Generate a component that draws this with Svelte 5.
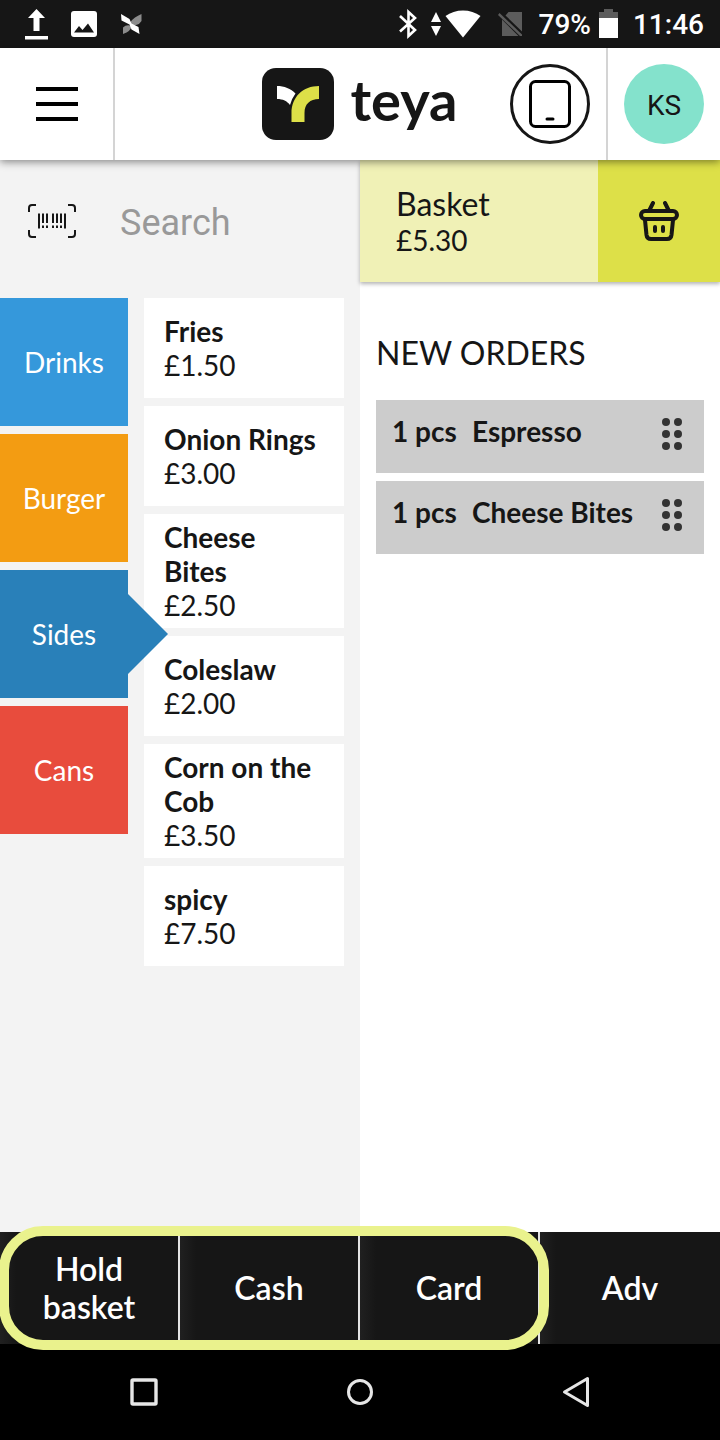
<script>
  const categories = [
    { name: 'Drinks', tone: 'blue' },
    { name: 'Burger', tone: 'orange' },
    { name: 'Sides', tone: 'navy', active: true },
    { name: 'Cans', tone: 'red' }
  ];
  const products = [
    { name: 'Fries', price: '£1.50' },
    { name: 'Onion Rings', price: '£3.00' },
    { name: 'Cheese Bites', price: '£2.50' },
    { name: 'Coleslaw', price: '£2.00' },
    { name: 'Corn on the Cob', price: '£3.50' },
    { name: 'spicy', price: '£7.50' }
  ];
  const orders = [
    { qty: '1 pcs', name: 'Espresso' },
    { qty: '1 pcs', name: 'Cheese Bites' }
  ];
</script>

<div class="screen">
  <div class="status">
    <div class="notices">
      <svg width="24" height="32" viewBox="0 0 24 32" fill="#fff"><path d="M12.500 1 21 10H15.500V23H9.500V10H4ZM1 28h23v3.500H1z" /></svg>
      <svg width="26" height="26" viewBox="0 0 26 26"><rect width="26" height="26" rx="3" fill="#fff" /><path d="M3 21.500 8 15l3.500 4L17 12.500 23 21.500Z" fill="#161616" /></svg>
      <svg width="22" height="20" viewBox="0 0 22 20"><path d="M21.500 0V7Q20 10 16 11L11.500 12L10.500 8Q14 3 21.500 0ZM3 20V13.500Q6 10.500 10 11.500L12 12Q11 17 3 20Z" fill="#8c8c8c" /><path d="M1 0 9.500 5 11.500 9.500 18.500 13 19.500 20 11.500 15.500 9.500 10.500 1.500 6.500Z" fill="#fff" /></svg>
    </div>
    <div class="system">
      <svg width="18" height="30" viewBox="0 0 18 30" fill="none" stroke="#fff" stroke-width="2.600"><path d="M1 7 16 21 9.500 27V3L16 9 1 22.500" /></svg>
      <svg class="traffic" width="10" height="24" viewBox="0 0 10 24" fill="#fff"><path d="M5 0 10 10H0ZM0 14H10L5 24Z" /></svg>
      <svg class="wifi" width="36" height="28" viewBox="0 0 36 28" fill="#fff"><path d="M0.500 6C10-1.500 26-1.500 35.500 6L18 27.500Z" /></svg>
      <svg width="26" height="26" viewBox="0 0 26 26" fill="#5c5c5c"><path d="M11.500 1H25V20.500L8.500 4.500ZM5 8.500 21.500 25H5ZM2.500 2 25 23.500V25H23L1 4Z" /></svg>
      <span class="percent">79%</span>
      <svg width="20" height="30" viewBox="0 0 20 30"><path d="M5 0h9v3h5v7H0V3h5z" fill="#5c5c5c" /><path d="M0 9h19v20H0z" fill="#fff" /></svg>
      <span class="clock">11:46</span>
    </div>
  </div>

  <header>
    <div class="side">
      <button class="menu" aria-label="Menu">
        <svg width="42" height="34" viewBox="0 0 42 34" stroke="#000" stroke-width="4"><path d="M0 2H42M0 17H42M0 32H42" /></svg>
      </button>
    </div>
    <div class="brand">
      <svg width="72" height="72" viewBox="0 0 72 72">
        <rect width="72" height="72" rx="14" fill="#161616" />
        <path d="M15 18C22 18 29 20.500 33.500 25.500Q30 30 28 37C25 33 21 31 15 31Z" fill="#fff" />
        <path d="M57 18V31C48 31 42.500 36 42.500 45V54H29.500V45C29.500 29 41 18 57 18Z" fill="#dde048" />
      </svg>
      <span>teya</span>
    </div>
    <div class="side end">
      <button class="device" aria-label="Device">
        <svg width="42" height="48" viewBox="0 0 42 48" fill="none" stroke="#000" stroke-width="3"><rect x="1.500" y="1.500" width="39" height="45" rx="5" /><path d="M18 39H24" stroke-linecap="round" /></svg>
      </button>
      <div class="account"><button class="avatar">KS</button></div>
    </div>
  </header>

  <main>
    <section class="catalog">
      <div class="search">
        <button class="scan" aria-label="Scan barcode">
          <svg width="48" height="34" viewBox="0 0 48 34" fill="none" stroke="#161616" stroke-width="2">
            <path d="M1 8V4Q1 1 4 1H8M40 1H44Q47 1 47 4V8M47 26V30Q47 33 44 33H40M8 33H4Q1 33 1 30V26" />
            <path d="M11 9.500V24.500M37 9.500V24.500M15 9.500V19M19 9.500V19M25 9.500V19M29 9.500V19M33 9.500V19M15 21.500V24M19 21.500V24M25 21.500V24M29 21.500V24M33 21.500V24" />
          </svg>
        </button>
        <input type="text" placeholder="Search" aria-label="Search" />
      </div>
      <div class="shelves">
        <nav class="categories">
          {#each categories as c}
            <button class="tile {c.tone}" class:active={c.active}>{c.name}</button>
          {/each}
        </nav>
        <div class="products">
          {#each products as p}
            <button class="product"><strong>{p.name}</strong><span>{p.price}</span></button>
          {/each}
        </div>
      </div>
    </section>

    <section class="order">
      <div class="basket">
        <div class="total"><span class="label">Basket</span><span>£5.30</span></div>
        <button class="open" aria-label="Open basket">
          <svg width="40" height="40" viewBox="0 0 40 40" fill="none" stroke="#161616" stroke-width="4" stroke-linecap="round" stroke-linejoin="round">
            <rect x="2" y="10" width="36" height="8" rx="4" />
            <path d="M6 19 7.500 34Q8 38 12 38H28Q32 38 32.500 34L34 19M14 2 10.500 9M26 2 29.500 9M16 26V30M24 26V30" />
          </svg>
        </button>
      </div>
      <div class="new">
        <h2>NEW ORDERS</h2>
        <ul>
          {#each orders as o}
            <li>
              <span class="qty">{o.qty}</span><span class="item">{o.name}</span>
              <svg width="20" height="32" viewBox="0 0 20 32" fill="#333"><circle cx="4" cy="4" r="4" /><circle cx="16" cy="4" r="4" /><circle cx="4" cy="16" r="4" /><circle cx="16" cy="16" r="4" /><circle cx="4" cy="28" r="4" /><circle cx="16" cy="28" r="4" /></svg>
            </li>
          {/each}
        </ul>
      </div>
    </section>
  </main>

  <footer>
    <div class="payments">
      <button>Hold basket</button>
      <button>Cash</button>
      <button>Card</button>
    </div>
    <button class="adv">Adv</button>
  </footer>

  <nav class="system-nav">
    <button aria-label="Recent apps"><svg width="28" height="28" viewBox="0 0 28 28" fill="none" stroke="#e6e6e6" stroke-width="3.400"><rect x="2" y="2" width="24" height="24" rx="1" /></svg></button>
    <button aria-label="Home"><svg width="28" height="28" viewBox="0 0 28 28" fill="none" stroke="#e6e6e6" stroke-width="3"><circle cx="14" cy="14" r="11.500" /></svg></button>
    <button aria-label="Back"><svg width="28" height="32" viewBox="0 0 28 32" fill="none" stroke="#e6e6e6" stroke-width="3" stroke-linejoin="round"><path d="M25.500 2.500V29.500L2.500 16Z" /></svg></button>
  </nav>
</div>

<style>
  :global(body) { margin: 0; }
  .screen {
    min-height: 100vh;
    display: flex;
    flex-direction: column;
    overflow: hidden;
    color: #161616;
    background: #fff;
    font-family: Lato, "Open Sans", sans-serif;
    font-size: 28px;
    line-height: 34px;
  }
  .screen * { box-sizing: border-box; }
  svg { display: block; flex: none; }
  button { padding: 0; border: 0; background: none; color: inherit; font: inherit; cursor: pointer; }

  .status {
    height: 48px;
    padding: 0 16px 0 24px;
    display: flex;
    align-items: center;
    justify-content: space-between;
    background: #161616;
    color: #fff;
    font-family: Roboto, sans-serif;
    font-weight: 500;
  }
  .notices { display: flex; align-items: center; gap: 23px; }
  .system { display: flex; align-items: center; }
  .traffic { margin-left: 14px; }
  .wifi { margin: 0 16px 0 4px; }
  .percent { margin: 2px 8px 0 16px; }
  .clock { margin: 2px 0 0 14px; }

  header {
    position: relative;
    z-index: 2;
    height: 112px;
    display: grid;
    grid-template-columns: 1fr auto 1fr;
    background: #fff;
    box-shadow: 0 2px 8px rgba(0, 0, 0, 0.45);
  }
  .side { display: flex; align-items: center; }
  .end { justify-content: flex-end; }
  .menu { width: 115px; height: 100%; display: grid; place-items: center; border-right: 2px solid #d4d4d4; }
  .brand { display: flex; align-items: center; gap: 16px; font-size: 56px; line-height: 64px; font-weight: 700; }
  .brand span { padding-bottom: 8px; }
  .device { width: 80px; height: 80px; display: grid; place-items: center; border: 3px solid #161616; border-radius: 50%; }
  .account { height: 100%; margin-left: 16px; padding: 0 16px; display: flex; align-items: center; border-left: 2px solid #d4d4d4; }
  .avatar { width: 80px; height: 80px; padding-top: 4px; border-radius: 50%; background: #84e2cc; font-family: Roboto, sans-serif; }

  main { flex: 1; display: grid; grid-template-columns: repeat(2, minmax(0, 1fr)); }
  .catalog { background: #f3f3f3; }
  .search { height: 122px; margin-bottom: 16px; padding: 0 16px 0 28px; display: flex; align-items: center; gap: 44px; }
  .search input {
    flex: 1;
    min-width: 0;
    padding: 4px 0 0;
    border: 0;
    outline: 0;
    background: none;
    font: 36px/44px Roboto, sans-serif;
  }
  .search input::placeholder { color: #999; opacity: 1; }
  .shelves { display: flex; gap: 16px; padding-right: 16px; }
  .categories { flex: none; width: 128px; display: flex; flex-direction: column; gap: 8px; }
  .tile { position: relative; height: 128px; color: #fff; }
  .blue { background: #3598db; }
  .orange { background: #f39c12; }
  .navy { background: #2980b9; }
  .red { background: #e84c3d; }
  .active::after {
    content: "";
    position: absolute;
    left: 100%;
    top: 24px;
    border: 40px solid transparent;
    border-right: 0;
    border-left-color: #2980b9;
  }
  .products { flex: 1; min-width: 0; display: flex; flex-direction: column; gap: 8px; }
  .product {
    min-height: 100px;
    padding: 6px 24px 6px 20px;
    display: flex;
    flex-direction: column;
    justify-content: center;
    background: #fff;
    text-align: left;
  }

  .basket { height: 122px; display: flex; box-shadow: 0 2px 4px rgba(0, 0, 0, 0.3); }
  .total { flex: 1; padding-left: 36px; display: flex; flex-direction: column; justify-content: center; background: #f0f1b6; }
  .label { font-size: 32px; line-height: 38px; }
  .open { width: 122px; display: grid; place-items: center; background: #dde048; }
  .new { padding: 52px 16px 16px; }
  h2 { margin: 0 0 28px; font-size: 32px; line-height: 38px; font-weight: 400; }
  ul { margin: 0; padding: 0; list-style: none; display: grid; gap: 8px; }
  li { min-height: 73px; padding: 14px 22px 16px 16px; display: flex; align-items: flex-start; background: #ccc; font-weight: 700; }
  li svg { margin-top: 4px; }
  .qty { min-width: 80px; }
  .item { flex: 1; }

  footer { display: grid; grid-template-columns: 3fr 1fr; height: 112px; background: #161616; color: #fff; font-size: 32px; line-height: 38px; font-weight: 600; }
  .payments { position: relative; display: grid; grid-template-columns: repeat(3, minmax(0, 1fr)); }
  .payments::after {
    content: "";
    position: absolute;
    inset: -6px -9px -6px -1px;
    border: 10px solid #eaf28d;
    border-radius: 44px;
    pointer-events: none;
  }
  footer button { padding: 0 24px; background: linear-gradient(90deg, #202020, #161616 16px); }
  .payments button { border-right: 2px solid #e4e4e4; }

  .system-nav { height: 96px; padding: 0 5%; display: grid; grid-template-columns: repeat(3, 1fr); background: #000; }
  .system-nav button { display: grid; place-items: center; }
</style>
